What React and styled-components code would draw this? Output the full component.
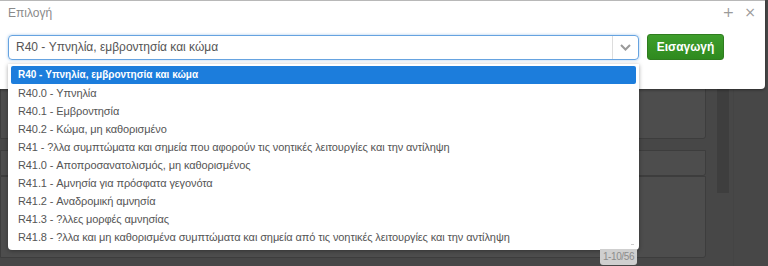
import React from "react";
import styled, { createGlobalStyle } from "styled-components";

const Global = createGlobalStyle`
  html, body { margin: 0; padding: 0; }
  body { width: 768px; height: 266px; overflow: hidden; background: #474747; font-family: "Liberation Sans", Arial, sans-serif; }
`;

const Page = styled.div`
  position: relative;
  width: 768px;
  height: 266px;
  background: #474747;
  overflow: hidden;
`;

const Backdrop = styled.div`
  display: flex;
  height: 100%;
`;

const MainCol = styled.div`
  width: 706px;
  display: flex;
  flex-direction: column;
  padding-top: 40px;
`;

const Panel = styled.div`
  height: ${(p) => p.h}px;
  margin-bottom: ${(p) => p.mb || 0}px;
  background: #4d4d4d;
  border: 1px solid #3d3d3d;
  border-radius: 0 0 3px 0;
  box-sizing: border-box;
`;

const ScrollCol = styled.div`
  margin-left: 11px;
  width: 12px;
  height: 193px;
  background: #3e3e3e;
`;

const RightStrip = styled.div`
  margin-left: 4px;
  width: 1px;
  height: 100%;
  background: #444;
`;

const Modal = styled.div`
  position: absolute;
  left: 0;
  top: 0;
  width: 765px;
  height: 89px;
  background: #fff;
  border-top: 1px solid #b8b8b8;
  border-radius: 0 0 4px 0;
  box-shadow: 0 1px 3px rgba(0,0,0,0.4);
  box-sizing: border-box;
  padding: 0 8px;
`;

const Header = styled.div`
  display: flex;
  align-items: center;
  height: 31px;
  padding-bottom: 2px;
`;

const Title = styled.div`
  flex: 1;
  font-size: 12px;
  color: #8a8a8a;
  margin-top: -7px;
`;

const HeadIcon = styled.span`
  color: #9a9a9a;
  font-size: 14px;
  line-height: 1;
  margin-left: ${(p) => p.ml}px;
  margin-right: ${(p) => p.mr || 0}px;
  margin-top: -10px;
  font-family: "DejaVu Sans", sans-serif;
`;

const Row = styled.div`
  display: flex;
  align-items: center;
`;

const SelectWrap = styled.div`
  position: relative;
  width: 631px;
`;

const SelectBox = styled.div`
  display: flex;
  align-items: center;
  height: 25px;
  border: 1px solid #66a3e0;
  border-radius: 4px;
  box-shadow: 0 0 3px rgba(102,163,224,0.6);
  box-sizing: border-box;
`;

const SelectText = styled.div`
  flex: 1;
  padding-left: 7px;
  font-size: 12px;
  color: #555;
`;

const ArrowBox = styled.div`
  width: 25px;
  height: 100%;
  border-left: 1px solid #ddd;
  display: flex;
  align-items: center;
  justify-content: center;
`;

const Button = styled.button`
  margin-left: 8px;
  width: 77px;
  height: 26px;
  border: 1px solid #2f7d1f;
  border-radius: 3px;
  background: linear-gradient(#3e9e2c, #2f8a1f);
  color: #fff;
  font-family: "Liberation Sans", Arial, sans-serif;
  font-weight: 700;
  font-size: 12px;
  padding: 0;
`;

const Dropdown = styled.div`
  position: absolute;
  left: 0;
  top: 29px;
  width: 631px;
  height: 186px;
  background: #fff;
  border-radius: 0 0 4px 4px;
  box-shadow: 0 1px 4px rgba(0,0,0,0.35);
  padding: 2px 3px;
  box-sizing: border-box;
`;

const Item = styled.div`
  height: 18px;
  line-height: 18px;
  padding-left: 7px;
  font-size: ${(p) => (p.active ? 10 : 11)}px;
  letter-spacing: ${(p) => (p.active ? 0 : -0.1)}px;
  white-space: nowrap;
  color: ${(p) => (p.active ? "#fff" : "#555")};
  background: ${(p) => (p.active ? "#1c7ddc" : "transparent")};
  font-weight: ${(p) => (p.active ? 700 : 400)};
  border-radius: 2px;
`;

const ScrollHint = styled.div`
  position: absolute;
  right: 5px;
  bottom: 5px;
  width: 3px;
  height: 2px;
  border-bottom: 1px solid #ccc;
`;

const Pager = styled.div`
  position: absolute;
  left: 592px;
  top: 214px;
  width: 37px;
  height: 16px;
  background: #cfcfcf;
  border-radius: 0 0 3px 3px;
  font-size: 10px;
  color: #8c8c8c;
  display: flex;
  align-items: center;
  justify-content: center;
  letter-spacing: -0.4px;
`;

const items = [
  "R40 - Υπνηλία, εμβροντησία και κώμα",
  "R40.0 - Υπνηλία",
  "R40.1 - Εμβροντησία",
  "R40.2 - Κώμα, μη καθορισμένο",
  "R41 - ?λλα συμπτώματα και σημεία που αφορούν τις νοητικές λειτουργίες και την αντίληψη",
  "R41.0 - Αποπροσανατολισμός, μη καθορισμένος",
  "R41.1 - Αμνησία για πρόσφατα γεγονότα",
  "R41.2 - Αναδρομική αμνησία",
  "R41.3 - ?λλες μορφές αμνησίας",
  "R41.8 - ?λλα και μη καθορισμένα συμπτώματα και σημεία από τις νοητικές λειτουργίες και την αντίληψη",
];

export default function App() {
  return (
    <Page>
      <Global />
      <Backdrop>
        <MainCol>
          <Panel h={99} mb={11} />
          <Panel h={26} />
          <Panel h={82} />
        </MainCol>
        <ScrollCol />
        <RightStrip />
      </Backdrop>
      <Modal>
        <Header>
          <Title>Επιλογή</Title>
          <HeadIcon ml={0}>+</HeadIcon>
          <HeadIcon ml={10} mr={1}>×</HeadIcon>
        </Header>
        <Row>
          <SelectWrap>
            <SelectBox>
              <SelectText>R40 - Υπνηλία, εμβροντησία και κώμα</SelectText>
              <ArrowBox>
                <svg width="11" height="7" viewBox="0 0 11 7">
                  <path d="M1 1 L5.5 5.5 L10 1" fill="none" stroke="#9a9a9a" strokeWidth="2" />
                </svg>
              </ArrowBox>
            </SelectBox>
            <Dropdown>
              {items.map((t, i) => (
                <Item key={i} active={i === 0}>{t}</Item>
              ))}
              <ScrollHint />
            </Dropdown>
            <Pager>1-10/56</Pager>
          </SelectWrap>
          <Button>Εισαγωγή</Button>
        </Row>
      </Modal>
    </Page>
  );
}
